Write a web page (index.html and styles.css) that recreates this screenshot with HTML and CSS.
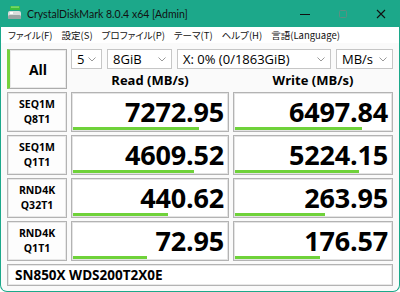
FILE: index.html
```html
<!DOCTYPE html>
<html lang="ja">
<head>
    <meta charset="UTF-8">
    <title>CrystalDiskMark</title>
    <link rel="stylesheet" href="styles.css">
</head>
<body>
    <div class="window">
        <div class="titlebar">
            <svg class="app-icon" width="14" height="14" viewBox="0 0 14 14">
                <rect x="2" y="0" width="10" height="4" rx="1" fill="#3bbf3b"/>
                <rect x="3" y="0.5" width="8" height="1.2" fill="#8fe07a"/>
                <rect x="0" y="5" width="13" height="8" rx="2" fill="#d9dcdc"/>
                <rect x="0" y="9" width="13" height="4" rx="1.5" fill="#9aa3a3"/>
                <rect x="2" y="6" width="3" height="2" fill="#ffffff"/>
            </svg>
            <span class="title">CrystalDiskMark 8.0.4 x64 [Admin]</span>
            <div class="controls">
                <span class="ctl">
                    <svg width="10" height="10" viewBox="0 0 10 10"><path d="M0 5.5h10" stroke="#111" stroke-width="1"/></svg>
                </span>
                <span class="ctl">
                    <svg width="10" height="10" viewBox="0 0 10 10"><rect x="1.5" y="1.5" width="7" height="7" rx="1" fill="none" stroke="#5c8f82" stroke-width="1"/></svg>
                </span>
                <span class="ctl">
                    <svg width="10" height="10" viewBox="0 0 10 10"><path d="M1 1L9 9M9 1L1 9" stroke="#111" stroke-width="1.1"/></svg>
                </span>
            </div>
        </div>

        <div class="menubar">
            <span class="menu-item">ファイル(F)</span>
            <span class="menu-item">設定(S)</span>
            <span class="menu-item">プロファイル(P)</span>
            <span class="menu-item">テーマ(T)</span>
            <span class="menu-item">ヘルプ(H)</span>
            <span class="menu-item">言語(Language)</span>
        </div>

        <div class="main">
            <div class="all-btn">All</div>

            <div class="options">
                <div class="combo combo-count"><span>5</span><svg class="chev" width="8" height="5" viewBox="0 0 8 5"><path d="M0.5 0.5L4 4L7.5 0.5" fill="none" stroke="#999" stroke-width="1"/></svg></div>
                <div class="combo combo-size"><span>8GiB</span><svg class="chev" width="8" height="5" viewBox="0 0 8 5"><path d="M0.5 0.5L4 4L7.5 0.5" fill="none" stroke="#999" stroke-width="1"/></svg></div>
                <div class="combo combo-drive"><span>X: 0% (0/1863GiB)</span><svg class="chev" width="8" height="5" viewBox="0 0 8 5"><path d="M0.5 0.5L4 4L7.5 0.5" fill="none" stroke="#999" stroke-width="1"/></svg></div>
                <div class="combo combo-unit"><span>MB/s</span><svg class="chev" width="8" height="5" viewBox="0 0 8 5"><path d="M0.5 0.5L4 4L7.5 0.5" fill="none" stroke="#999" stroke-width="1"/></svg></div>
            </div>

            <div class="head">Read (MB/s)</div>
            <div class="head">Write (MB/s)</div>

            <div class="label">SEQ1M<br>Q8T1</div>
            <div class="value"><span class="num">7272.95</span><span class="bar" style="width: 126px"></span></div>
            <div class="value"><span class="num">6497.84</span><span class="bar" style="width: 127px"></span></div>

            <div class="label">SEQ1M<br>Q1T1</div>
            <div class="value"><span class="num">4609.52</span><span class="bar" style="width: 121px"></span></div>
            <div class="value"><span class="num">5224.15</span><span class="bar" style="width: 124px"></span></div>

            <div class="label">RND4K<br>Q32T1</div>
            <div class="value"><span class="num">440.62</span><span class="bar" style="width: 95px"></span></div>
            <div class="value"><span class="num">263.95</span><span class="bar" style="width: 90px"></span></div>

            <div class="label">RND4K<br>Q1T1</div>
            <div class="value"><span class="num">72.95</span><span class="bar" style="width: 74px"></span></div>
            <div class="value"><span class="num">176.57</span><span class="bar" style="width: 85px"></span></div>

            <div class="name">SN850X WDS200T2X0E</div>
        </div>
    </div>
</body>
</html>
```

FILE: styles.css
```css
body {
    margin: 0;
    font-family: "Open Sans", "Noto Sans CJK JP", sans-serif;
    color: #000;
}
.window {
    width: 400px;
    height: 292px;
    box-sizing: border-box;
    border: 1px solid #1ca88a;
    border-top: none;
    border-radius: 0 0 7px 7px;
    background: #fafafa;
    overflow: hidden;
}
.titlebar {
    height: 27px;
    margin: 0 -1px;
    background: #1ca88a;
    display: flex;
    align-items: center;
}
.app-icon {
    margin-left: 8px;
    margin-top: -1px;
}
.title {
    margin-left: 5px;
    font-family: "Lato", sans-serif;
    font-size: 10.5px;
    color: #111;
    white-space: nowrap;
}
.controls {
    margin-left: auto;
    display: flex;
    height: 100%;
}
.ctl {
    width: 38px;
    display: flex;
    align-items: center;
    justify-content: center;
}
.menubar {
    height: 16px;
    background: #fff;
    display: flex;
    align-items: center;
    padding-left: 7px;
    font-family: "Noto Sans CJK JP", sans-serif;
    font-size: 9.5px;
    font-feature-settings: "palt";
    color: #111;
    white-space: nowrap;
    overflow: hidden;
}
.menu-item {
    flex: none;
    margin-right: 9px;
}
.main {
    display: grid;
    grid-template-columns: 60px 158px 160px;
    grid-template-rows: 20px 17px repeat(4, 40px) 22px;
    column-gap: 4px;
    row-gap: 3px;
    padding: 6px 6px 0 6px;
}
.all-btn {
    grid-row: 1 / span 2;
    border: 1px solid #adadad;
    border-left: 3px solid #74d13c;
    background: #fdfdfd;
    box-shadow: inset 0 0 0 1px #e9e9e9;
    display: flex;
    align-items: center;
    justify-content: center;
    font-weight: bold;
    font-size: 14px;
}
.options {
    grid-column: 2 / span 2;
    display: flex;
    gap: 5px;
}
.combo {
    box-sizing: border-box;
    height: 20px;
    border: 1px solid #c6c6c6;
    background: #fff;
    display: flex;
    align-items: center;
    padding: 0 5px;
    font-size: 13px;
    white-space: nowrap;
}
.combo .chev {
    margin-left: auto;
}
.combo-count { width: 31px; }
.combo-size { width: 65px; }
.combo-drive { width: 154px; }
.combo-unit { width: 57px; }
.head {
    font-weight: bold;
    font-size: 13px;
    text-align: center;
    line-height: 17px;
}
.label {
    border: 1px solid #b3b3b3;
    box-shadow: inset 0 0 0 1px #e8e8e8;
    background: #fdfdfd;
    display: flex;
    align-items: center;
    justify-content: center;
    text-align: center;
    font-weight: bold;
    font-size: 10.5px;
    line-height: 15px;
}
.value {
    border: 1px solid #b3b3b3;
    box-shadow: inset 0 0 0 1px #e4e4e4;
    background: #fff;
    display: flex;
    flex-direction: column;
}
.num {
    margin-top: 4px;
    padding-right: 4px;
    text-align: right;
    font-weight: bold;
    font-size: 27px;
    line-height: 30px;
    letter-spacing: -0.2px;
}
.bar {
    display: block;
    margin-top: auto;
    margin-left: 1px;
    margin-bottom: 1px;
    height: 3px;
    background: #6fd23a;
}
.name {
    grid-column: 1 / span 3;
    border: 1px solid #b3b3b3;
    box-shadow: inset 0 0 0 1px #e8e8e8;
    background: #fff;
    display: flex;
    align-items: center;
    padding-left: 7px;
    font-weight: bold;
    font-size: 13.5px;
}
```
